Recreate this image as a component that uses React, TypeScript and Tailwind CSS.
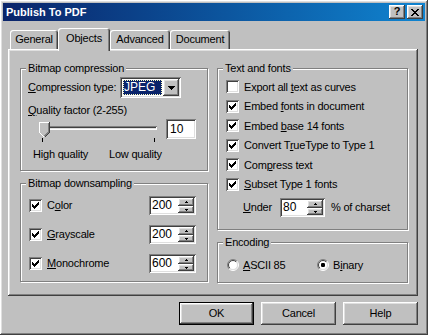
import React from "react";

const RAISED =
  "shadow-[inset_-1px_-1px_0_#404040,inset_1px_1px_0_#ffffff,inset_-2px_-2px_0_#808080,inset_2px_2px_0_#dfdfdf]";
const SUNKEN =
  "shadow-[inset_1px_1px_0_#808080,inset_-1px_-1px_0_#ffffff,inset_2px_2px_0_#404040,inset_-2px_-2px_0_#dfdfdf]";

function Pix({ rows, color = "#000" }: { rows: string[]; color?: string }) {
  const h = rows.length;
  const w = rows[0].length;
  return (
    <svg width={w} height={h} viewBox={`0 0 ${w} ${h}`} shapeRendering="crispEdges" className="block">
      {rows.flatMap((r, y) =>
        r.split("").map((c, x) =>
          c === "X" ? <rect key={`${x}-${y}`} x={x} y={y} width={1} height={1} fill={color} /> : null
        )
      )}
    </svg>
  );
}

const CHECK = ["......X", ".....XX", "X...XXX", "XX.XXX.", "XXXXX..", ".XXX...", "..X...."];
const CLOSE_X = ["XX....XX", ".XX..XX.", "..XXXX..", "...XX...", "..XXXX..", ".XX..XX.", "XX....XX"];
const DOWN = ["XXXXXXX", ".XXXXX.", "..XXX..", "...X..."];
const SUP = [".X.", "XXX"];
const SDOWN = ["XXX", ".X."];

function Checkbox({ checked }: { checked: boolean }) {
  return (
    <div className={`w-[13px] h-[13px] bg-white ${SUNKEN} flex items-center justify-center shrink-0`}>
      {checked && <Pix rows={CHECK} />}
    </div>
  );
}

function Radio({ checked }: { checked: boolean }) {
  return (
    <svg width="12" height="12" viewBox="0 0 12 12" className="block shrink-0">
      <defs>
        <linearGradient id="ro" x1="0" y1="0" x2="1" y2="1">
          <stop offset="50%" stopColor="#808080" />
          <stop offset="50%" stopColor="#ffffff" />
        </linearGradient>
        <linearGradient id="ri" x1="0" y1="0" x2="1" y2="1">
          <stop offset="50%" stopColor="#404040" />
          <stop offset="50%" stopColor="#dfdfdf" />
        </linearGradient>
      </defs>
      <circle cx="6" cy="6" r="5.5" fill="none" stroke="url(#ro)" strokeWidth="1" />
      <circle cx="6" cy="6" r="4.5" fill="#ffffff" stroke="url(#ri)" strokeWidth="1" />
      {checked && <rect x="4" y="4" width="4" height="4" rx="1.2" fill="#000" />}
    </svg>
  );
}

function Spin({ value, w }: { value: string; w: string }) {
  return (
    <div className={`${w} h-[19px] bg-white ${SUNKEN} flex p-[2px] shrink-0`}>
      <span className="flex-1 pl-[1px] leading-[15px] text-[12px] tracking-normal">{value}</span>
      <div className="w-[16px] flex flex-col">
        <div className={`h-[8px] bg-[#c0c0c0] ${RAISED} flex items-center justify-center`}>
          <Pix rows={SUP} />
        </div>
        <div className={`h-[7px] bg-[#c0c0c0] ${RAISED} flex items-center justify-center`}>
          <Pix rows={SDOWN} />
        </div>
      </div>
    </div>
  );
}

function Group({ label, className, children }: { label: string; className: string; children: React.ReactNode }) {
  return (
    <div
      className={`relative border border-[#808080] shadow-[inset_1px_1px_0_#ffffff,1px_1px_0_#ffffff] ${className}`}
    >
      <span className="absolute -top-[8px] left-[5px] px-[2px] bg-[#c0c0c0] leading-[14px]">{label}</span>
      {children}
    </div>
  );
}

function Tab({ label, w, selected }: { label: string; w: string; selected?: boolean }) {
  return (
    <div
      className={`${w} ${
        selected ? "h-[23px] -mb-[2px] relative z-10 pt-[3px]" : "h-[19px] pt-[2px]"
      } bg-[#c0c0c0] rounded-t-[3px] shadow-[inset_1px_1px_0_#ffffff,inset_-1px_0_0_#404040,inset_-2px_0_0_#808080] flex justify-center leading-[14px]`}
    >
      {label}
    </div>
  );
}

function Button({ label, def, w }: { label: string; def?: boolean; w: string }) {
  return (
    <div className={`${w} h-[23px] ${def ? "border border-black" : ""}`}>
      <div className={`w-full h-full bg-[#c0c0c0] ${RAISED} flex items-center justify-center`}>{label}</div>
    </div>
  );
}

export default function App() {
  return (
    <div
      className={`w-[428px] h-[335px] bg-[#c0c0c0] ${RAISED} p-[3px] flex flex-col text-[11px] tracking-[-0.2px] text-black font-['Liberation_Sans',Arial,sans-serif] select-none`}
    >
      {/* Title bar */}
      <div className="h-[18px] bg-linear-to-r from-[#0a246a] to-[#1084d0] flex items-center pl-[3px] pr-[2px]">
        <span className="text-white font-bold text-[11px] tracking-normal">Publish To PDF</span>
        <div className="ml-auto flex gap-[2px]">
          <div className={`w-[16px] h-[14px] bg-[#c0c0c0] ${RAISED} flex items-center justify-center font-bold text-[11px] leading-none pb-[1px]`}>
            ?
          </div>
          <div className={`w-[16px] h-[14px] bg-[#c0c0c0] ${RAISED} flex items-center justify-center`}>
            <Pix rows={CLOSE_X} />
          </div>
        </div>
      </div>

      {/* Tabs */}
      <div className="mt-[7px] ml-[5px] h-[21px] flex items-end">
        <div className="w-[2px]" />
        <Tab label="General" w="w-[48px]" />
        <Tab label="Objects" w="w-[52px]" selected />
        <Tab label="Advanced" w="w-[60px]" />
        <Tab label="Document" w="w-[60px]" />
      </div>

      {/* Panel */}
      <div className={`ml-[5px] w-[410px] h-[247px] bg-[#c0c0c0] ${RAISED} pt-[19px] pl-[12px] flex gap-[9px]`}>
        {/* Left column */}
        <div className="w-[188px] flex flex-col gap-[12px]">
          <Group label="Bitmap compression" className="h-[103px] pt-[8px] pl-[7px]">
            <div className="flex items-center h-[21px]">
              <span className="w-[92px]">
                <u>C</u>ompression type:
              </span>
              <div className={`w-[61px] h-[21px] bg-white ${SUNKEN} p-[2px] flex`}>
                <div className="flex-1 m-[1px] bg-[#0a246a] text-white outline outline-dotted outline-[#ffffc0] -outline-offset-1 text-[12px] leading-[15px] pl-[1px] tracking-normal">
                  JPEG
                </div>
                <div className={`w-[16px] bg-[#c0c0c0] ${RAISED} flex items-center justify-center`}>
                  <Pix rows={DOWN} />
                </div>
              </div>
            </div>
            <div className="mt-[5px] h-[14px] leading-[14px]">
              <u>Q</u>uality factor (2-255)
            </div>
            <div className="mt-[2px] h-[24px] flex">
              <div className="relative w-[138px] h-[24px]">
                <div className={`ml-[12px] mt-[7px] w-[117px] h-[4px] bg-[#c0c0c0] ${SUNKEN}`} />
                <svg width="11" height="16" viewBox="0 0 11 16" className="absolute left-[11px] top-[3px]" shapeRendering="crispEdges">
                  <polygon points="0,0 10,0 10,10 5,15 0,10" fill="#c0c0c0" />
                  <path d="M0.5 10.5 V0.5 H9.5" stroke="#ffffff" fill="none" />
                  <path d="M1 11 L5 15" stroke="#ffffff" fill="none" />
                  <path d="M10.5 0 V10.5 L5.5 15.5" stroke="#404040" fill="none" />
                  <path d="M9.5 1 V10 L5.5 14" stroke="#808080" fill="none" />
                </svg>
                <div className="absolute left-[14px] top-[19px] w-[1px] h-[4px] bg-black" />
                <div className="absolute left-[126px] top-[19px] w-[1px] h-[4px] bg-black" />
              </div>
              <div className={`w-[30px] h-[20px] bg-white ${SUNKEN} pl-[4px] text-[12px] leading-[20px] tracking-normal`}>10</div>
            </div>
            <div className="mt-[4px] h-[14px] leading-[14px] flex">
              <span className="ml-[5px] w-[76px]">High quality</span>
              <span>Low quality</span>
            </div>
          </Group>

          <Group label="Bitmap downsampling" className="h-[99px] pt-[12px] pl-[8px] pr-[11px] flex flex-col gap-[10px]">
            {[
              { l: "C", m: "o", r: "lor", v: "200" },
              { l: "", m: "G", r: "rayscale", v: "200" },
              { l: "", m: "M", r: "onochrome", v: "600" },
            ].map((row, i) => (
              <div key={i} className="h-[19px] flex items-center">
                <Checkbox checked />
                <span className="ml-[5px]">
                  {row.l}
                  <u>{row.m}</u>
                  {row.r}
                </span>
                <div className="ml-auto">
                  <Spin value={row.v} w="w-[47px]" />
                </div>
              </div>
            ))}
          </Group>
        </div>

        {/* Right column */}
        <div className="w-[191px] flex flex-col gap-[12px]">
          <Group label="Text and fonts" className="h-[162px] pt-[8px] pl-[8px]">
            {[
              { c: false, a: "Export all ", m: "t", b: "ext as curves" },
              { c: true, a: "Embed ", m: "f", b: "onts in document" },
              { c: true, a: "Embed ", m: "b", b: "ase 14 fonts" },
              { c: true, a: "Convert T", m: "r", b: "ueType to Type 1" },
              { c: true, a: "Com", m: "p", b: "ress text" },
              { c: true, a: "", m: "S", b: "ubset Type 1 fonts" },
            ].map((row, i) => (
              <div key={i} className="h-[19.5px] flex items-center">
                <Checkbox checked={row.c} />
                <span className="ml-[5px] whitespace-pre">
                  {row.a}
                  <u>{row.m}</u>
                  {row.b}
                </span>
              </div>
            ))}
            <div className="mt-[4px] pl-[17px] h-[19px] flex items-center">
              <span className="w-[37px]">
                <u>U</u>nder
              </span>
              <Spin value="80" w="w-[45px]" />
              <span className="ml-[6px]">% of charset</span>
            </div>
          </Group>

          <Group label="Encoding" className="h-[41px] pt-[5px] pl-[9px] flex items-center">
            <div className="w-[90px] flex items-center">
              <Radio checked={false} />
              <span className="ml-[4px]">
                <u>A</u>SCII 85
              </span>
            </div>
            <div className="flex items-center">
              <Radio checked />
              <span className="ml-[4px]">
                B<u>i</u>nary
              </span>
            </div>
          </Group>
        </div>
      </div>

      {/* Buttons */}
      <div className="mt-[6px] h-[23px] flex justify-end pr-[7px] gap-[7px]">
        <Button label="OK" def w="w-[75px]" />
        <Button label="Cancel" w="w-[75px]" />
        <Button label="Help" w="w-[75px]" />
      </div>
    </div>
  );
}
